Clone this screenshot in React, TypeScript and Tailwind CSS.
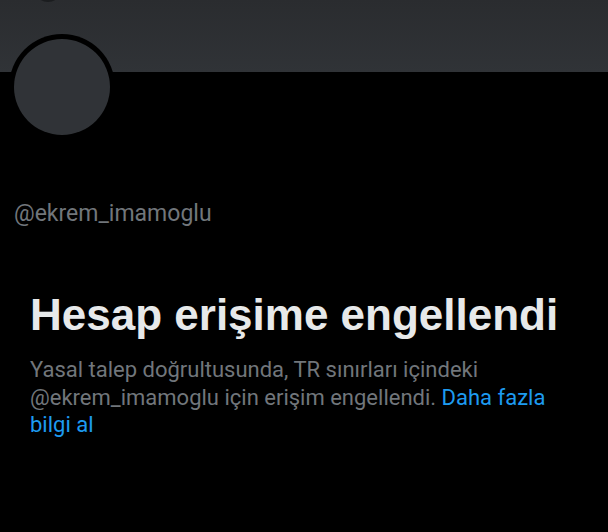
import React from 'react';

export default function App() {
  return (
    <div className="relative w-[608px] h-[532px] overflow-hidden bg-black" style={{ fontFamily: 'Roboto, "Liberation Sans", sans-serif' }}>
      {/* banner */}
      <div className="h-[72px] bg-gradient-to-b from-[#2a2c2f] to-[#303337]" />
      <div className="absolute left-[34px] top-[-26px] h-[28px] w-[28px] rounded-full bg-[#1b1d1f]" />

      {/* avatar */}
      <div className="absolute left-[9px] top-[34px] h-[106px] w-[106px] rounded-full bg-black p-[5px]">
        <div className="h-full w-full rounded-full bg-[#303337]" />
      </div>

      <div className="px-[14px] pt-[130px]">
        <p className="text-[23px] leading-[24px] text-[#71767b]">@ekrem_imamoglu</p>
      </div>

      <div className="px-[30px] pt-[65px]">
        <h1 className="text-[44px] leading-[48px] font-bold text-[#e7e9ea]" style={{ fontFamily: '"Liberation Sans", Arial, sans-serif' }}>
          Hesap erişime engellendi
        </h1>
        <p className="mt-[17px] text-[22px] leading-[27.5px] text-[#71767b]">
          Yasal talep doğrultusunda, TR sınırları içindeki @ekrem_imamoglu için erişim engellendi.{' '}
          <span className="text-[#1d9bf0]">Daha fazla bilgi al</span>
        </p>
      </div>
    </div>
  );
}
